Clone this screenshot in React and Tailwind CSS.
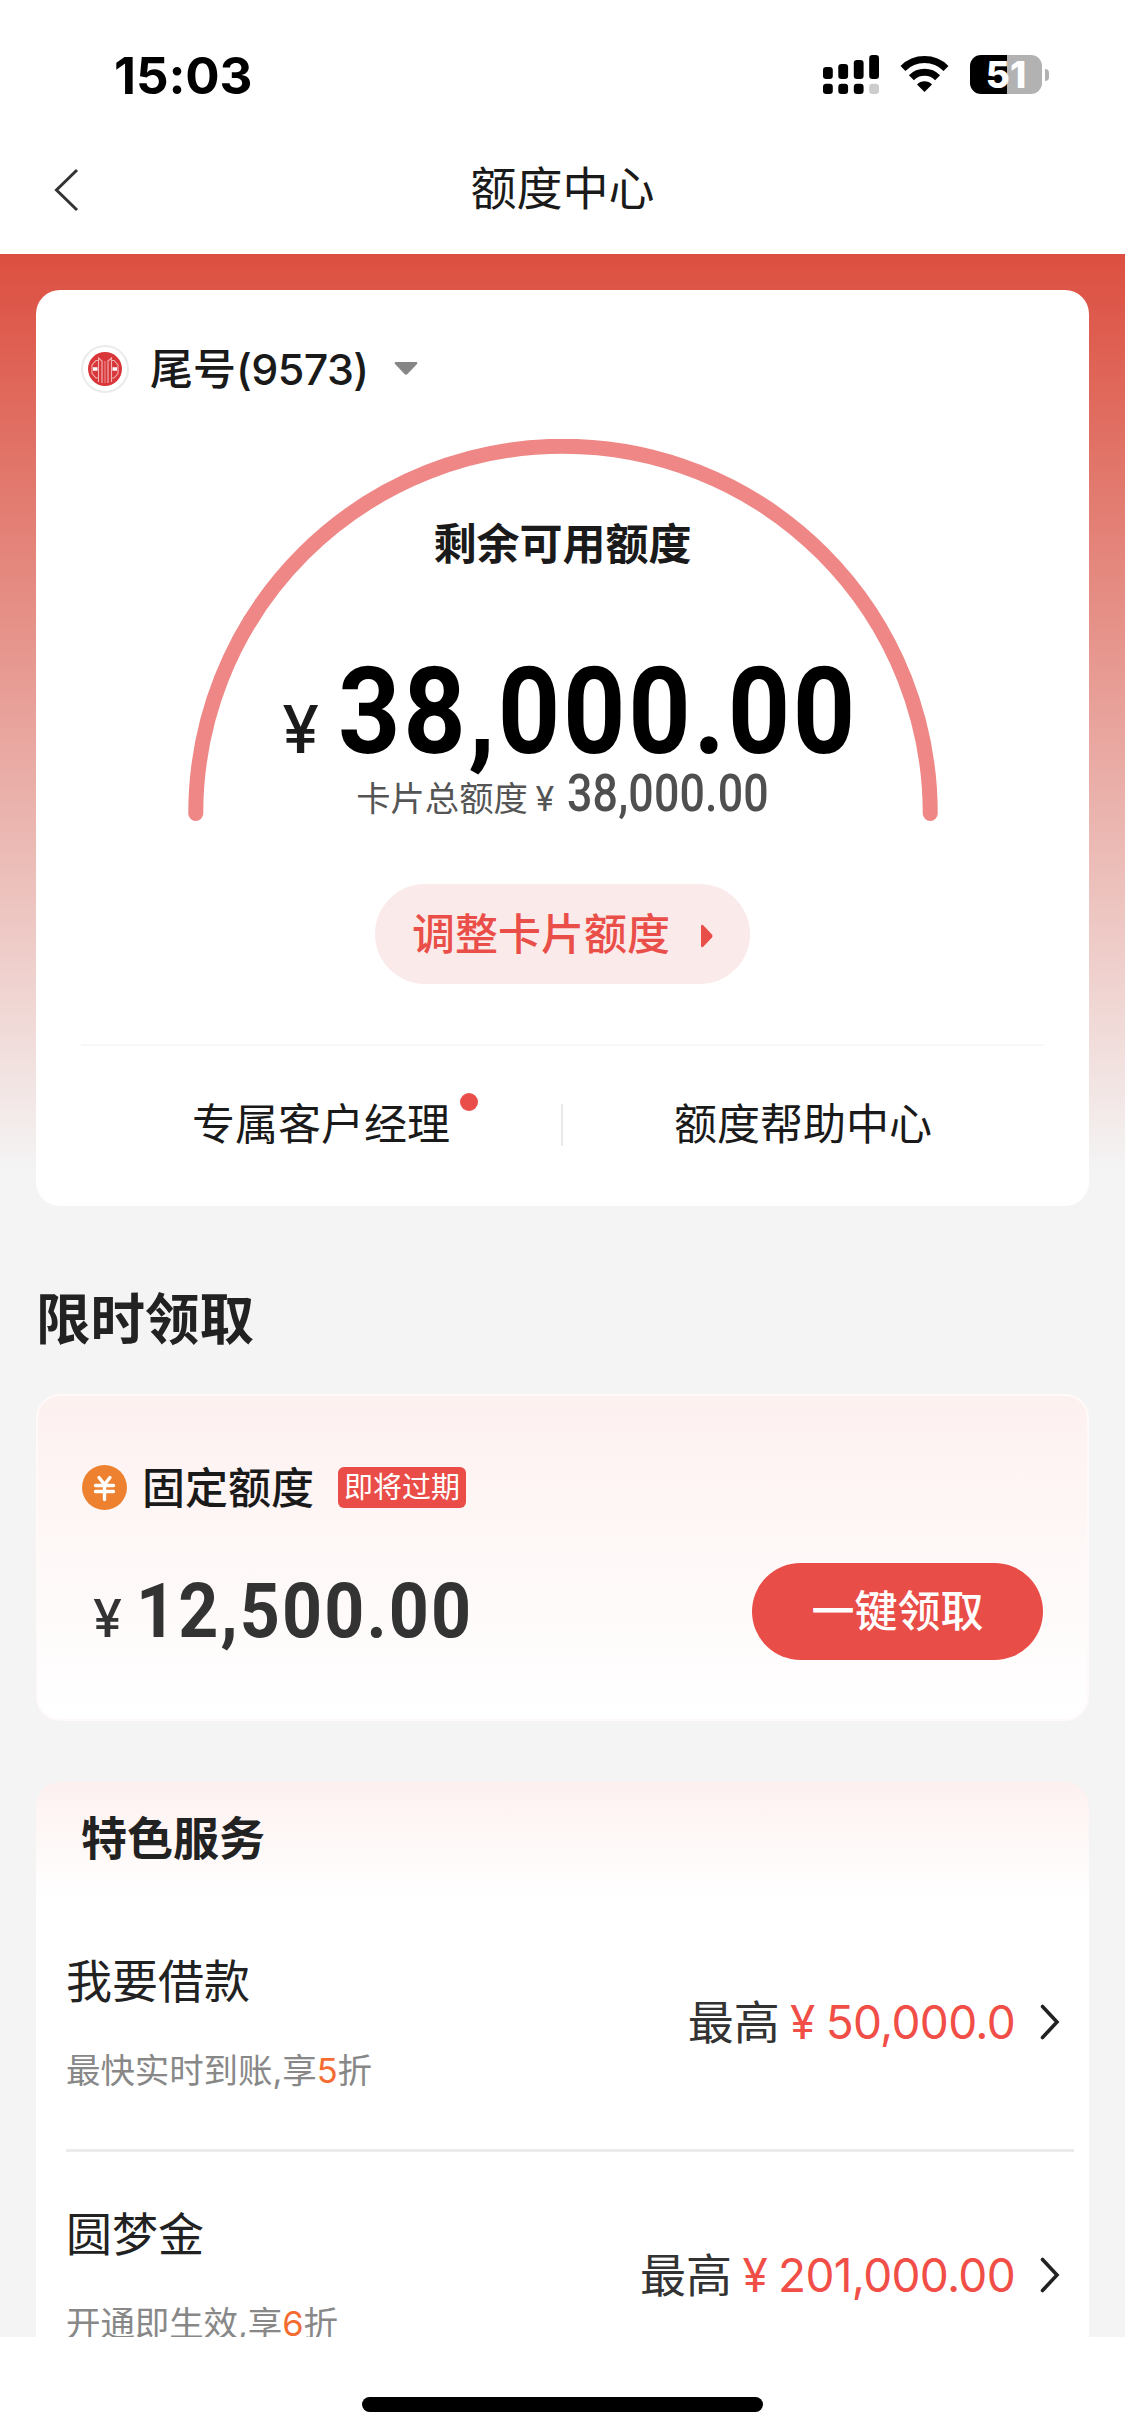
const services = [
  { name: '我要借款', desc: '最快实时到账,享', discount: '5', amount: '50,000.0' },
  { name: '圆梦金', desc: '开通即生效,享', discount: '6', amount: '201,000.00' },
]

function Signal() {
  const bars = [
    { x: 0, y: 12 },
    { x: 15.3, y: 9 },
    { x: 30.8, y: 5 },
    { x: 46.2, y: 0 },
  ]
  return (
    <svg width="56" height="39" viewBox="0 0 56 39">
      {bars.map((b, i) => (
        <g key={b.x}>
          <rect x={b.x} y={b.y} width="9.8" height={24 - b.y} rx="3.2" fill="#000" />
          <rect x={b.x} y="28.8" width="9.8" height="10.2" rx="3.2" fill={i === 3 ? '#cdcdcd' : '#000'} />
        </g>
      ))}
    </svg>
  )
}

function Wifi() {
  return (
    <svg width="49" height="36" viewBox="0 0 49 36" fill="none" stroke="#000" strokeWidth="7">
      <path d="M3 12.4 A30.5 30.5 0 0 1 46 12.4" />
      <path d="M11.4 21.8 A18.5 18.5 0 0 1 37.6 21.8" />
      <path d="M24.5 36 L17 28.4 A10.6 10.6 0 0 1 32 28.4 Z" fill="#000" stroke="none" />
    </svg>
  )
}

function StatusBar() {
  return (
    <div className="flex h-[130px] items-start justify-between pl-[114px] pr-[76px]">
      <div className="mt-[46px] text-[51px] font-bold leading-[60px] tracking-[-0.1px] text-black">15:03</div>
      <div className="mt-[55px] flex items-start">
        <Signal />
        <div className="ml-[21px] mt-px">
          <Wifi />
        </div>
        <div className="ml-[21px] flex items-center">
          <div className="flex h-[39px] w-[72px] items-center justify-center rounded-[11px] bg-linear-to-r from-black from-[51%] to-[#b2b2b2] to-[51%] text-[37px] font-extrabold leading-[39px] text-white">
            51
          </div>
          <div className="ml-[3px] h-3 w-1 rounded-r-full bg-[#b2b2b2]" />
        </div>
      </div>
    </div>
  )
}

function BankLogo() {
  return (
    <div className="flex size-12 items-center justify-center rounded-full border-2 border-[#ebebeb] bg-white">
      <svg width="34" height="34" viewBox="0 0 34 34" fill="none">
        <circle cx="17" cy="17" r="17" fill="#d9363a" />
        <g stroke="#f2b3b3" strokeWidth="1.1">
          <path d="M10.500 30 V6 L14 9 V31 M23.500 30 V6 L20 9 V31" />
          <path d="M17 9 V31" stroke="#eb8a8b" />
          <path d="M10.500 8.500 H8 L4 13 V21.500 L8 26 H10.500 M23.500 8.500 H26 L30 13 V21.500 L26 26 H23.500" />
        </g>
        <path d="M5 17 H9.500 M24.500 17 H29" stroke="#fff" strokeWidth="3.500" />
      </svg>
    </div>
  )
}

function QuotaCard() {
  return (
    <div className="flex h-[916px] flex-col items-center rounded-[24px] bg-white">
      <div className="mt-[55px] flex h-12 w-full items-center pl-[45px]">
        <BankLogo />
        <div className="ml-[21px] text-[43px] font-medium leading-[48px] text-[#1a1a1a]">
          尾号<span className="tracking-[-0.6px]">(9573)</span>
        </div>
        <svg className="ml-[25px]" width="24" height="13" viewBox="0 0 24 13">
          <path d="M1.500 0 H22.500 Q24 0.500 23 2 L13.500 12 Q12 13.500 10.500 12 L1 2 Q0 0.500 1.500 0 Z" fill="#868686" />
        </svg>
      </div>

      {/* Gauge */}
      <div className="relative mt-[46px] flex h-[382px] w-[750px] flex-col items-center">
        <svg className="absolute inset-0" width="750" height="382" viewBox="0 0 750 382">
          <path d="M7.750 374.500 A367.250 367.250 0 0 1 742.250 374.500" fill="none" stroke="#ee8785" strokeWidth="15" strokeLinecap="round" />
        </svg>
        <div className="relative mt-[79px] text-[43px] font-bold leading-[52px] text-[#1a1a1a]">剩余可用额度</div>
        <div className="relative mt-[83px] flex h-[100px] items-baseline leading-[118px]">
          <span className="w-[64px] text-center text-[66px] font-medium text-[#1a1a1a]">¥</span>
          <span className="ml-[5px] w-[519px] whitespace-nowrap font-[Roboto] text-[121px] font-bold text-black">
            <span className="inline-block origin-left scale-x-[0.9] tracking-[3px]">38,000.00</span>
          </span>
        </div>
        <div className="relative mt-[17px] flex h-12 items-baseline leading-[48px] text-[#555]">
          <span className="text-[34.300px]">卡片总额度</span>
          <span className="w-[34px] text-center text-[34px]">¥</span>
          <span className="ml-[5px] w-[202px] whitespace-nowrap font-[Roboto] text-[52px] font-medium text-[#4f4f4f]">
            <span className="inline-block origin-left scale-x-[0.86] tracking-[0.2px]">38,000.00</span>
          </span>
        </div>
      </div>

      <button className="mt-[63px] flex h-[100px] w-[375px] items-center rounded-full bg-[#fbeaea] pl-[37px] text-[43px] font-medium leading-[60px] text-[#ea4e48]">
        调整卡片额度
        <svg className="ml-[31px] mt-1" width="12" height="24" viewBox="0 0 12 24">
          <path d="M0 2 Q0.500 0 2 1 L11 10.500 Q12 12 11 13.500 L2 23 Q0.500 24 0 22 Z" fill="#ea4e48" />
        </svg>
      </button>

      <div className="mt-[60px] h-[2px] w-[963px] bg-[#f7f7f7]" />
      <div className="flex h-[158px] w-[963px] items-center text-[43px] text-[#1a1a1a]">
        <div className="flex flex-1 justify-center">
          <div className="relative">
            专属客户经理
            <span className="absolute -right-[28px] top-px size-[18px] rounded-full bg-[#e94e4a]" />
          </div>
        </div>
        <div className="h-[42px] w-[2px] bg-[#e8e8e8]" />
        <div className="flex flex-1 justify-center pr-[1px]">额度帮助中心</div>
      </div>
    </div>
  )
}

function FixedQuota() {
  return (
    <div className="flex h-[327px] flex-col rounded-[24px] border-2 border-[#fff9f9] bg-linear-to-b/srgb from-[#fdf1f0] to-white pl-[44px] pr-[44px]">
      <div className="mt-[69px] flex h-[46px] items-center">
        <svg width="45" height="45" viewBox="0 0 45 45">
          <circle cx="22.500" cy="22.500" r="22.500" fill="#ed8130" />
          <path d="M17 12.500 L22.500 19.500 L28 12.500 M13.500 20.500 H31.500 M13.500 26.500 H31.500 M22.500 20 V34.500" fill="none" stroke="#fff" strokeWidth="3.400" strokeLinecap="round" />
        </svg>
        <span className="ml-[15px] text-[43px] font-medium leading-[46px] text-[#1a1a1a]">固定额度</span>
        <span className="ml-[24px] flex h-[41px] w-[128px] items-center justify-center rounded-[6px] bg-[#ea4d48] text-[29px] leading-[41px] text-white">
          即将过期
        </span>
      </div>
      <div className="mt-[52px] flex h-[97px] items-center justify-between">
        <div className="mt-[8px] flex items-baseline leading-[97px] text-[#333]">
          <span className="w-[51px] text-center text-[52px] font-medium">¥</span>
          <span className="ml-[3px] whitespace-nowrap font-[Roboto] text-[76px] font-bold">
            <span className="inline-block origin-left scale-x-[0.92] tracking-[2.3px]">12,500.00</span>
          </span>
        </div>
        <button className="h-[97px] w-[291px] rounded-full bg-[#e94d48] text-[43px] font-medium leading-[92px] text-white">一键领取</button>
      </div>
    </div>
  )
}

function ServiceRow({ item, last }) {
  return (
    <div className={last ? 'flex h-[253px]' : 'flex h-[253px] border-b-3 border-[#ebebeb]'}>
      <div className="flex-1">
        <div className="mt-[52px] text-[46px] leading-[60px] text-[#222]">{item.name}</div>
        <div className="mt-[37px] text-[34.5px] leading-[46px] tracking-[-0.1px] text-[#888]">
          {item.desc}
          <span className="text-[#f56c32]">{item.discount}</span>折
        </div>
      </div>
      <div className="mr-[14px] mt-[93px] flex h-[60px] items-center text-[46px] leading-[60px] text-[#333]">
        最高
        <span className="w-[46px] text-center text-[#f04e47]">¥</span>
        <span className="tracking-[-0.7px] text-[#f04e47]">{item.amount}</span>
        <svg className="ml-[25px]" width="20" height="36" viewBox="0 0 20 36" fill="none">
          <path d="M2.500 2.500 L17 18 L2.500 33.500" stroke="#222" strokeWidth="3.600" strokeLinecap="round" />
        </svg>
      </div>
    </div>
  )
}

export default function App() {
  return (
    <div className="flex h-[2435px] w-[1125px] flex-col overflow-hidden bg-white font-[Inter,'Noto_Sans_CJK_SC',sans-serif]">
      <StatusBar />
      <div className="flex h-[124px] shrink-0 items-center px-[54px] pb-[5px]">
        <svg width="26" height="44" viewBox="0 0 26 44" fill="none">
          <path d="M23 2 L2.500 22 L23 42" stroke="#333" strokeWidth="3" />
        </svg>
        <div className="flex-1 pb-[3px] pr-[26px] text-center text-[46px] leading-[60px] text-[#1a1a1a]">额度中心</div>
      </div>

      <div className="h-[2083px] shrink-0 overflow-hidden bg-[#f4f4f4]">
        <div className="bg-linear-to-b/srgb from-[#dc4f40] to-[#f4f4f4] to-[916px] px-9 pt-[35.5px]">
          <QuotaCard />
          <h2 className="mt-[77px] text-[54.5px] font-bold leading-[72px] text-[#222]">限时领取</h2>
          <div className="mt-[39px]">
            <FixedQuota />
          </div>
          <div className="mt-[61px] rounded-[24px] bg-white bg-linear-to-b/srgb from-[#fdf1f0] to-white to-[118px]">
            <h3 className="pl-[45px] pt-[26px] text-[46px] font-bold leading-[60px] text-[#222]">特色服务</h3>
            <div className="mt-[31px] pl-[30px] pr-[15px]">
              {services.map((s, i) => (
                <ServiceRow key={s.name} item={s} last={i === services.length - 1} />
              ))}
            </div>
          </div>
        </div>
      </div>

      <div className="mx-auto mt-[60px] h-[15px] w-[401px] shrink-0 rounded-full bg-black" />
    </div>
  )
}
